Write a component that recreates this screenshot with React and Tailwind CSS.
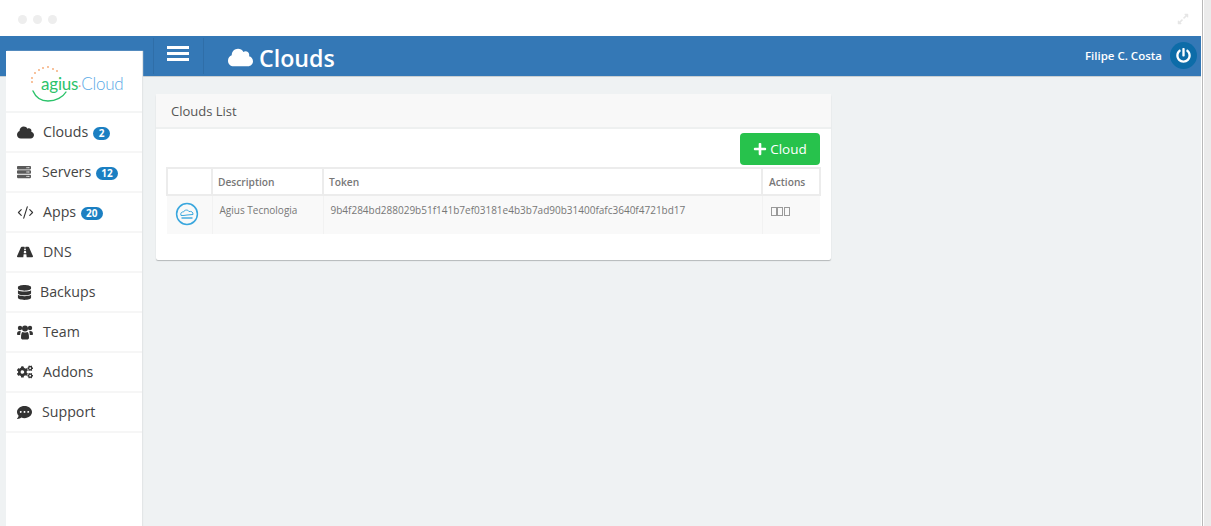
import React from 'react';
import { FaCloud, FaServer, FaRoad, FaDatabase, FaCogs, FaCommentDots, FaPlus, FaPowerOff, FaExpandAlt } from 'react-icons/fa';
import { CodeXml } from 'lucide-react';

function TeamIcon() {
  return (
    <svg width="16" height="15" viewBox="0 0 16 15" fill="currentColor">
      <circle cx="3" cy="3" r="2.2" />
      <circle cx="13" cy="3" r="2.2" />
      <circle cx="8" cy="3.6" r="3" />
      <path d="M0 9.6 C0 6.8 1 6 2.6 6 C3.2 6 3.6 6.3 4 6.5 C3.3 7.5 3.2 8.6 3.2 10 H1 C0.4 10 0 9.9 0 9.6 Z" />
      <path d="M16 9.6 C16 6.8 15 6 13.4 6 C12.8 6 12.4 6.3 12 6.5 C12.7 7.5 12.8 8.6 12.8 10 H15 C15.6 10 16 9.9 16 9.6 Z" />
      <path d="M4 12.6 C4 9 4.6 7 6 7 C7 7.8 9 7.8 10 7 C11.4 7 12 9 12 12.6 C12 14 11.2 14.6 10 14.6 H6 C4.8 14.6 4 14 4 12.6 Z" />
    </svg>
  );
}

const navItems = [
  { label: 'Clouds', icon: <FaCloud className="text-[17px]" />, width: 'w-[26px]', badge: '2' },
  { label: 'Servers', icon: <FaServer className="text-[14px] text-[#5a5a5a]" />, width: 'w-[25px]', badge: '12' },
  { label: 'Apps', icon: <CodeXml size={17} strokeWidth={1.6} />, width: 'w-[26px]', badge: '20' },
  { label: 'DNS', icon: <FaRoad className="text-[16px]" />, width: 'w-[26px]' },
  { label: 'Backups', icon: <FaDatabase className="text-[15px]" />, width: 'w-[23px]' },
  { label: 'Team', icon: <TeamIcon />, width: 'w-[26px]' },
  { label: 'Addons', icon: <FaCogs className="text-[16px]" />, width: 'w-[26px]' },
  { label: 'Support', icon: <FaCommentDots className="text-[15px]" />, width: 'w-[25px]' },
];

function Logo() {
  return (
    <div className="relative h-[62px] border-b-2 border-[#f4f5f5]">
      <svg className="absolute left-[24px] top-[14px]" width="60" height="40" viewBox="0 0 60 40" fill="none">
        <path d="M3 26 C6 33 11 36 18 36 C26 36 33 32 36 27" stroke="#2cc36b" strokeWidth="1.4" strokeLinecap="round" />
        <g fill="#f5a66f">
          <circle cx="2" cy="17" r="0.9" />
          <circle cx="2" cy="13" r="0.9" />
          <circle cx="5" cy="8" r="0.9" />
          <circle cx="9" cy="5" r="0.9" />
          <circle cx="13" cy="3" r="0.9" />
          <circle cx="18" cy="2" r="0.9" />
          <circle cx="23" cy="4" r="0.9" />
          <circle cx="27" cy="6" r="0.9" />
        </g>
      </svg>
      <div className="flex items-baseline pl-[35px] pt-[21px] leading-[24px] font-['Lato',sans-serif]">
        <span className="text-[17px] tracking-[-0.2px] text-[#2cc36b]">agius</span>
        <span className="text-[12px] text-[#f5a66f]">·</span>
        <span className="text-[17px] font-light tracking-[-0.3px] text-[#5aa9e6]">Cloud</span>
      </div>
    </div>
  );
}

function CloudBadge() {
  return (
    <svg width="24" height="24" viewBox="0 0 24 24" fill="none" stroke="#3aa7de">
      <circle cx="12" cy="12" r="10.4" strokeWidth="1.5" />
      <path d="M6 13.5 C5 11 7 9.5 8.5 10 C9.5 7.5 13 7.5 14 9.5 C16 9 18.5 10 18 12.5 L12 13 C10 13.5 8 13.5 6 13.5 Z" strokeWidth="1" />
      <path d="M6.5 16 H17.5" strokeWidth="1.4" />
    </svg>
  );
}

function Sidebar() {
  return (
    <aside className="relative z-10 ml-[6px] -mt-[26px] w-[136px] shrink-0 bg-white shadow-[1px_0_1px_#e3e6e7]">
      <Logo />
      {navItems.map((item) => (
        <div key={item.label} className="flex h-[40px] items-center border-b-2 border-[#f6f6f6] pl-[11px] text-[14.2px] text-[#444444]">
          <span className={`flex shrink-0 items-center text-[#333333] ${item.width}`}>
            {item.icon}
          </span>
          <span>{item.label}</span>
          {item.badge && (
            <span className="ml-[5px] mt-[2px] min-w-[17px] rounded-full bg-[#1b7fc2] px-[5px] text-center text-[10px] font-bold leading-[13px] text-white">
              {item.badge}
            </span>
          )}
        </div>
      ))}
    </aside>
  );
}

function CloudsPanel() {
  return (
    <section className="w-[675px] rounded-[2px] bg-white shadow-[0_1px_1px_#b4b8ba]">
      <div className="flex h-[35px] items-center border-b-2 border-[#eef0f0] bg-[#f8f8f8] pl-[15px] pt-[2px] text-[13px] text-[#555555]">
        Clouds List
      </div>
      <div className="pb-[26px] pl-[10px] pr-[12px]">
        <div className="flex h-[38px] justify-end pt-[4px]">
          <button className="-mr-[1px] flex h-[32px] w-[80px] items-center justify-center gap-[3px] rounded-[4px] bg-[#27c24c] text-[13.5px] text-white">
            <FaPlus className="text-[14px]" />
            Cloud
          </button>
        </div>
        <table className="w-full table-fixed border-collapse text-[#777777]">
          <colgroup>
            <col className="w-[45px]" />
            <col className="w-[111px]" />
            <col className="w-[439px]" />
            <col className="w-[58px]" />
          </colgroup>
          <thead>
            <tr className="h-[27px] text-left text-[10.2px]">
              <th className="border-2 border-[#ececec]"></th>
              <th className="border-2 border-[#ececec] pl-[5px] pt-[2px] font-semibold">Description</th>
              <th className="border-2 border-[#ececec] pl-[5px] pt-[2px] font-semibold">Token</th>
              <th className="border-2 border-[#ececec] pl-[6px] pt-[2px] font-semibold">Actions</th>
            </tr>
          </thead>
          <tbody>
            <tr className="h-[39px] bg-[#f9f9f9] align-top text-[10px]">
              <td className="pl-[8px] pt-[6px]"><CloudBadge /></td>
              <td className="border-l border-[#f2f2f2] pl-[7px] pt-[7px]">Agius Tecnologia</td>
              <td className="border-l border-[#f2f2f2] pl-[7px] pt-[7px]">9b4f284bd288029b51f141b7ef03181e4b3b7ad90b31400fafc3640f4721bd17</td>
              <td className="border-l border-[#f2f2f2] pl-[8px] pt-[11px]">
                <div className="flex gap-[0.5px]">
                  <span className="h-[9px] w-[6px] border border-[#999999]"></span>
                  <span className="h-[9px] w-[6px] border border-[#999999]"></span>
                  <span className="h-[9px] w-[6px] border border-[#999999]"></span>
                </div>
              </td>
            </tr>
          </tbody>
        </table>
      </div>
    </section>
  );
}

export default function App() {
  return (
    <div className="flex h-[526px] w-[1211px] overflow-hidden bg-[#ebebeb] font-['Open_Sans',sans-serif]">
      <div className="flex w-[1201px] shrink-0 flex-col">
        <div className="flex h-[36px] shrink-0 items-center justify-between bg-white pl-[18px] pr-[12px] pt-[2px]">
          <div className="flex gap-[6px]">
            <span className="h-[9px] w-[9px] rounded-full bg-[#eeeeee]"></span>
            <span className="h-[9px] w-[9px] rounded-full bg-[#eeeeee]"></span>
            <span className="h-[9px] w-[9px] rounded-full bg-[#eeeeee]"></span>
          </div>
          <FaExpandAlt className="text-[12px] text-[#e6e6e6]" />
        </div>
        <header className="flex h-[41px] shrink-0 items-center border-b border-[#c9cfd2] bg-[#3478b6] pl-[153px] pr-[4px] text-white">
          <div className="flex h-[36px] w-[51px] items-center justify-center border-x border-[#2f6ea8] pr-[2px]">
            <span className="-mt-[6px] flex w-[22px] flex-col gap-[3px]">
              <span className="h-[3px] bg-white"></span>
              <span className="h-[3px] bg-white"></span>
              <span className="h-[3px] bg-white"></span>
            </span>
          </div>
          <FaCloud className="ml-[24px] mt-[3px] text-[25px]" />
          <h1 className="ml-[6px] mt-[3px] text-[23.2px] font-semibold leading-[36px]">Clouds</h1>
          <span className="ml-auto -mt-[1px] text-[11.5px] font-semibold">Filipe C. Costa</span>
          <span className="ml-[8px] -mt-[1px] flex h-[27px] w-[27px] items-center justify-center rounded-full bg-[#0d6ca8]">
            <FaPowerOff className="text-[15px]" />
          </span>
        </header>
        <div className="flex min-h-0 flex-1 bg-[#eff2f3]">
          <Sidebar />
          <main className="pl-[14px] pt-[17px]">
            <CloudsPanel />
          </main>
        </div>
      </div>
      <div className="h-full w-[1px] bg-white"></div>
      <div className="h-full w-[1px] bg-[#b9b9b9]"></div>
      <div className="h-full w-[1px] bg-white"></div>
    </div>
  );
}
